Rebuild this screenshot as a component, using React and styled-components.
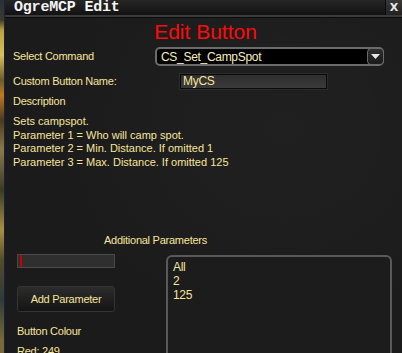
import React from 'react'
import styled, { createGlobalStyle } from 'styled-components'

const GlobalStyle = createGlobalStyle`
    html, body {
        margin: 0;
        padding: 0;
        background: #141414;
        overflow: hidden;
    }
`;

const Screen = styled.div`
    display: flex;
    width: 402px;
    height: 353px;
    overflow: hidden;
`;

const GameStrip = styled.div`
    width: 4px;
    flex-shrink: 0;
    background: linear-gradient(
        to bottom,
        #2a2f3a 0px, #3c3a2c 20px, #b8a040 30px, #d9c25a 55px, #6b5a2a 80px,
        #c07a20 95px, #4a3a1e 120px, #8a7a4a 150px, #3a3a26 190px,
        #a89040 230px, #564a2a 260px, #2e3a3a 300px, #7a6a3a 340px
    );
`;

const Window = styled.div`
    flex: 1;
    display: flex;
    flex-direction: column;
    border-left: 1px solid #1a2040;
    background: #1b1b1b;
    font-family: "Liberation Sans", Arial, sans-serif;
    font-size: 11px;
    color: #f7e59b;
`;

const TitleBar = styled.div`
    height: 16px;
    display: flex;
    align-items: stretch;
    background: linear-gradient(to bottom, #262626, #121212);
    border-bottom: 2px solid #3b3b3b;
`;

const Title = styled.div`
    flex: 1;
    padding-left: 9px;
    font-family: "Liberation Mono", "Courier New", monospace;
    font-weight: bold;
    font-size: 15px;
    line-height: 15px;
    color: #f4f4f4;
    letter-spacing: -0.2px;
`;

const CloseButton = styled.div`
    width: 16px;
    display: flex;
    align-items: center;
    justify-content: center;
    background: linear-gradient(to bottom, #383838, #222222);
    border-left: 1px solid #0c0c0c;
    font-family: "DejaVu Sans", sans-serif;
    font-weight: bold;
    font-size: 11px;
    color: #e8e8e8;
`;

const Body = styled.div`
    flex: 1;
    padding: 3px 10px 0 8px;
    border-top: 1px solid #0b0b0b;
    background:
        radial-gradient(ellipse at 70% 30%, rgba(255, 255, 255, 0.025), transparent 60%),
        #1b1b1b;
`;

const Heading = styled.h1`
    margin: 0 0 4px;
    padding-left: 6px;
    text-align: center;
    font-family: "Liberation Sans", Arial, sans-serif;
    font-weight: normal;
    font-size: 21px;
    line-height: 22px;
    color: #ff0a0a;
`;

const FieldRow = styled.div`
    display: grid;
    grid-template-columns: ${p => p.$labelWidth}px ${p => p.$fieldWidth}px;
    align-items: center;
    margin-bottom: ${p => p.$gap}px;
`;

const Label = styled.div`
    line-height: 13px;
    letter-spacing: -0.25px;
    margin-top: ${p => p.$top || 0}px;
`;

const Dropdown = styled.div`
    height: 15px;
    display: flex;
    align-items: center;
    border: 2px solid #6b6b6b;
    border-radius: 5px;
    background: #000;
    padding-left: 4px;
    color: #f7eebf;
    font-size: 12px;
    letter-spacing: -0.3px;
`;

const DropdownText = styled.span`
    flex: 1;
`;

const DropdownArrow = styled.div`
    width: 17px;
    height: 17px;
    margin-right: -2px;
    border: 1px solid #6b6b6b;
    border-radius: 4px;
    background: linear-gradient(to bottom, #2e2e2e, #1a1a1a);
    box-sizing: border-box;
    display: flex;
    align-items: center;
    justify-content: center;
`;

const TextInput = styled.div`
    height: 13px;
    border: 1px solid #0a0a0a;
    outline: 1px solid #2c2c2c;
    background: linear-gradient(to bottom, #2e2e2e, #3a3a3a);
    padding-left: 2px;
    line-height: 13px;
    font-size: 12px;
    letter-spacing: -0.3px;
`;

const Description = styled.div`
    margin-top: 7px;
    line-height: 13.6px;
    letter-spacing: 0;
`;

const SectionTitle = styled.div`
    margin-top: 65px;
    padding-left: 91px;
    line-height: 13px;
    letter-spacing: -0.25px;
`;

const Lower = styled.div`
    display: grid;
    grid-template-columns: 98px 226px;
    column-gap: 51px;
    margin-top: 7px;
    padding-left: 4px;
`;

const LeftColumn = styled.div`
    display: flex;
    flex-direction: column;
`;

const Bar = styled.div`
    position: relative;
    height: 12px;
    border: 1px solid #0d0d0d;
    outline: 1px solid #4a4a4a;
    outline-offset: -1px;
    background: #2f2f2f;
`;

const BarMark = styled.span`
    position: absolute;
    left: 2px;
    top: 0;
    bottom: 0;
    width: 2px;
    background: #c80000;
`;

const ActionButton = styled.div`
    margin-top: 18px;
    height: 26px;
    display: flex;
    align-items: center;
    justify-content: center;
    border: 1px solid #343434;
    border-radius: 3px;
    background: linear-gradient(to bottom, #2c2c2c, #141414);
    letter-spacing: -0.25px;
    box-sizing: border-box;
`;

const ListBox = styled.div`
    margin-top: 1px;
    height: 120px;
    border: 2px solid #595959;
    border-radius: 6px;
    background: #1c1c1c;
    padding: 3px 5px;
    line-height: 14px;
    font-size: 12px;
    letter-spacing: -0.3px;
`;

const ChevronDown = () => (
    <svg width="9" height="6" viewBox="0 0 9 6">
        <path d="M0 0 H9 L4.5 5 Z" fill="#e6e6e6" />
    </svg>
)

const App = () => {
    return (
        <>
            <GlobalStyle />
            <Screen>
                <GameStrip />
                <Window>
                    <TitleBar>
                        <Title>OgreMCP Edit</Title>
                        <CloseButton>X</CloseButton>
                    </TitleBar>
                    <Body>
                        <Heading>Edit Button</Heading>
                        <FieldRow $labelWidth={142} $fieldWidth={229} $gap={8}>
                            <Label>Select Command</Label>
                            <Dropdown>
                                <DropdownText>CS_Set_CampSpot</DropdownText>
                                <DropdownArrow><ChevronDown /></DropdownArrow>
                            </Dropdown>
                        </FieldRow>
                        <FieldRow $labelWidth={167} $fieldWidth={147} $gap={6}>
                            <Label>Custom Button Name:</Label>
                            <TextInput>MyCS</TextInput>
                        </FieldRow>
                        <Label>Description</Label>
                        <Description>
                            Sets campspot.<br />
                            Parameter 1 = Who will camp spot.<br />
                            Parameter 2 = Min. Distance. If omitted 1<br />
                            Parameter 3 = Max. Distance. If omitted 125
                        </Description>
                        <SectionTitle>Additional Parameters</SectionTitle>
                        <Lower>
                            <LeftColumn>
                                <Bar><BarMark /></Bar>
                                <ActionButton>Add Parameter</ActionButton>
                                <Label $top={13}>Button Colour</Label>
                                <Label $top={7}>Red: 249</Label>
                            </LeftColumn>
                            <ListBox>
                                All<br />
                                2<br />
                                125
                            </ListBox>
                        </Lower>
                    </Body>
                </Window>
            </Screen>
        </>
    )
}

export default App
